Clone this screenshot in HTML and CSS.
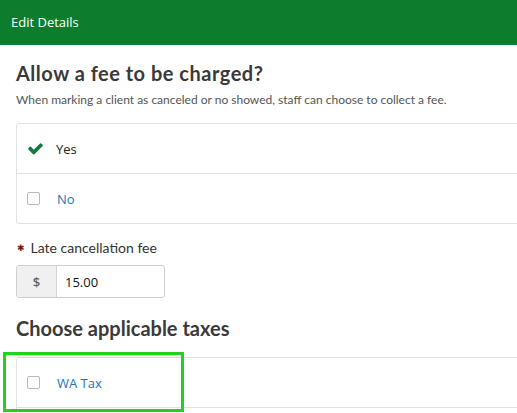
FILE: index.html
```html
<!DOCTYPE html>
<html>
<head>
<meta charset="utf-8">
<link rel="stylesheet" href="styles.css">
</head>
<body>
<div class="header">Edit Details</div>
<div class="content">
  <h2 class="title title-fee">Allow a fee to be charged?</h2>
  <p class="subtitle">When marking a client as canceled or no showed, staff can choose to collect a fee.</p>
  <div class="options">
    <div class="row">
      <svg class="check" viewBox="0 0 1792 1792"><path d="M1671 566q0 40-28 68l-724 724-136 136q-28 28-68 28t-68-28l-136-136-362-362q-28-28-28-68t28-68l136-136q28-28 68-28t68 28l294 295 656-657q28-28 68-28t68 28l136 136q28 28 28 68z"/></svg>
      <span class="label-dark">Yes</span>
    </div>
    <div class="row">
      <span class="box"></span>
      <span class="label-link">No</span>
    </div>
  </div>
  <div class="field-label"><span class="req">✱</span>Late cancellation fee</div>
  <div class="input-group">
    <span class="addon">$</span>
    <span class="input">15.00</span>
  </div>
  <h2 class="title title-taxes">Choose applicable taxes</h2>
  <div class="tax-wrap">
    <div class="options">
      <div class="row">
        <span class="box"></span>
        <span class="label-link">WA Tax</span>
      </div>
      <div class="row"></div>
    </div>
    <div class="highlight"></div>
  </div>
</div>
</body>
</html>
```
FILE: styles.css
```css
html, body {
  margin: 0;
  padding: 0;
  background: #fff;
  overflow: hidden;
}
body {
  width: 517px;
  height: 413px;
  font-family: Lato, "Open Sans", sans-serif;
}
.header {
  height: 45px;
  background: #0b7d2c;
  color: #fff;
  font-family: "Open Sans", sans-serif;
  font-size: 13px;
  line-height: 45px;
  padding-left: 11px;
}
.content {
  padding: 16px 0 0 16px;
}
.title {
  margin: 0;
  font-size: 20px;
  line-height: 24px;
  font-weight: 700;
  color: #3a3a3a;
}
.title-fee {
  letter-spacing: 0.5px;
}
.subtitle {
  margin: 7px 0 0;
  font-size: 12px;
  line-height: 16px;
  color: #555;
}
.options {
  margin-top: 15px;
  margin-right: -6px;
  border: 1px solid #e2e2e2;
  border-radius: 3px;
}
.row {
  height: 49px;
  display: flex;
  align-items: center;
  padding-left: 10px;
}
.row + .row {
  border-top: 1px solid #e2e2e2;
}
.check {
  width: 17px;
  height: 17px;
  fill: #107a3c;
  margin-right: 12px;
}
.box {
  width: 11px;
  height: 11px;
  border: 1px solid #b8b8b8;
  border-radius: 2px;
  margin-right: 17px;
  background: #fff;
}
.label-dark {
  font-family: "Open Sans", sans-serif;
  font-size: 13px;
  color: #222;
}
.label-link {
  font-family: "Open Sans", sans-serif;
  font-size: 13px;
  color: #1a74b9;
}
.field-label {
  margin-top: 15px;
  font-size: 14px;
  line-height: 18px;
  color: #333;
  display: flex;
  align-items: center;
}
.req {
  font-family: "DejaVu Sans", sans-serif;
  color: #7a1414;
  font-size: 9px;
  margin: 0 6px 0 1px;
}
.input-group {
  margin-top: 8px;
  display: flex;
  width: 149px;
  height: 33px;
  box-sizing: border-box;
  border: 1px solid #cfcfcf;
  border-radius: 3px;
  overflow: hidden;
}
.addon {
  width: 39px;
  background: #f0f0f0;
  border-right: 1px solid #d5d5d5;
  display: flex;
  align-items: center;
  justify-content: center;
  color: #666;
  font-family: "Open Sans", sans-serif;
  font-size: 13px;
  font-weight: 600;
}
.input {
  flex: 1;
  display: flex;
  align-items: center;
  padding-left: 8px;
  font-family: "Open Sans", sans-serif;
  font-size: 13px;
  color: #111;
}
.title-taxes {
  margin-top: 18px;
}
.tax-wrap {
  position: relative;
}
.tax-wrap .options {
  margin-top: 17px;
}
.highlight {
  position: absolute;
  left: -13px;
  top: -5px;
  width: 175px;
  height: 54px;
  border: 3px solid #22d022;
  box-shadow: inset 0 3px 3px -2px rgba(0,0,0,0.2);
}
```
